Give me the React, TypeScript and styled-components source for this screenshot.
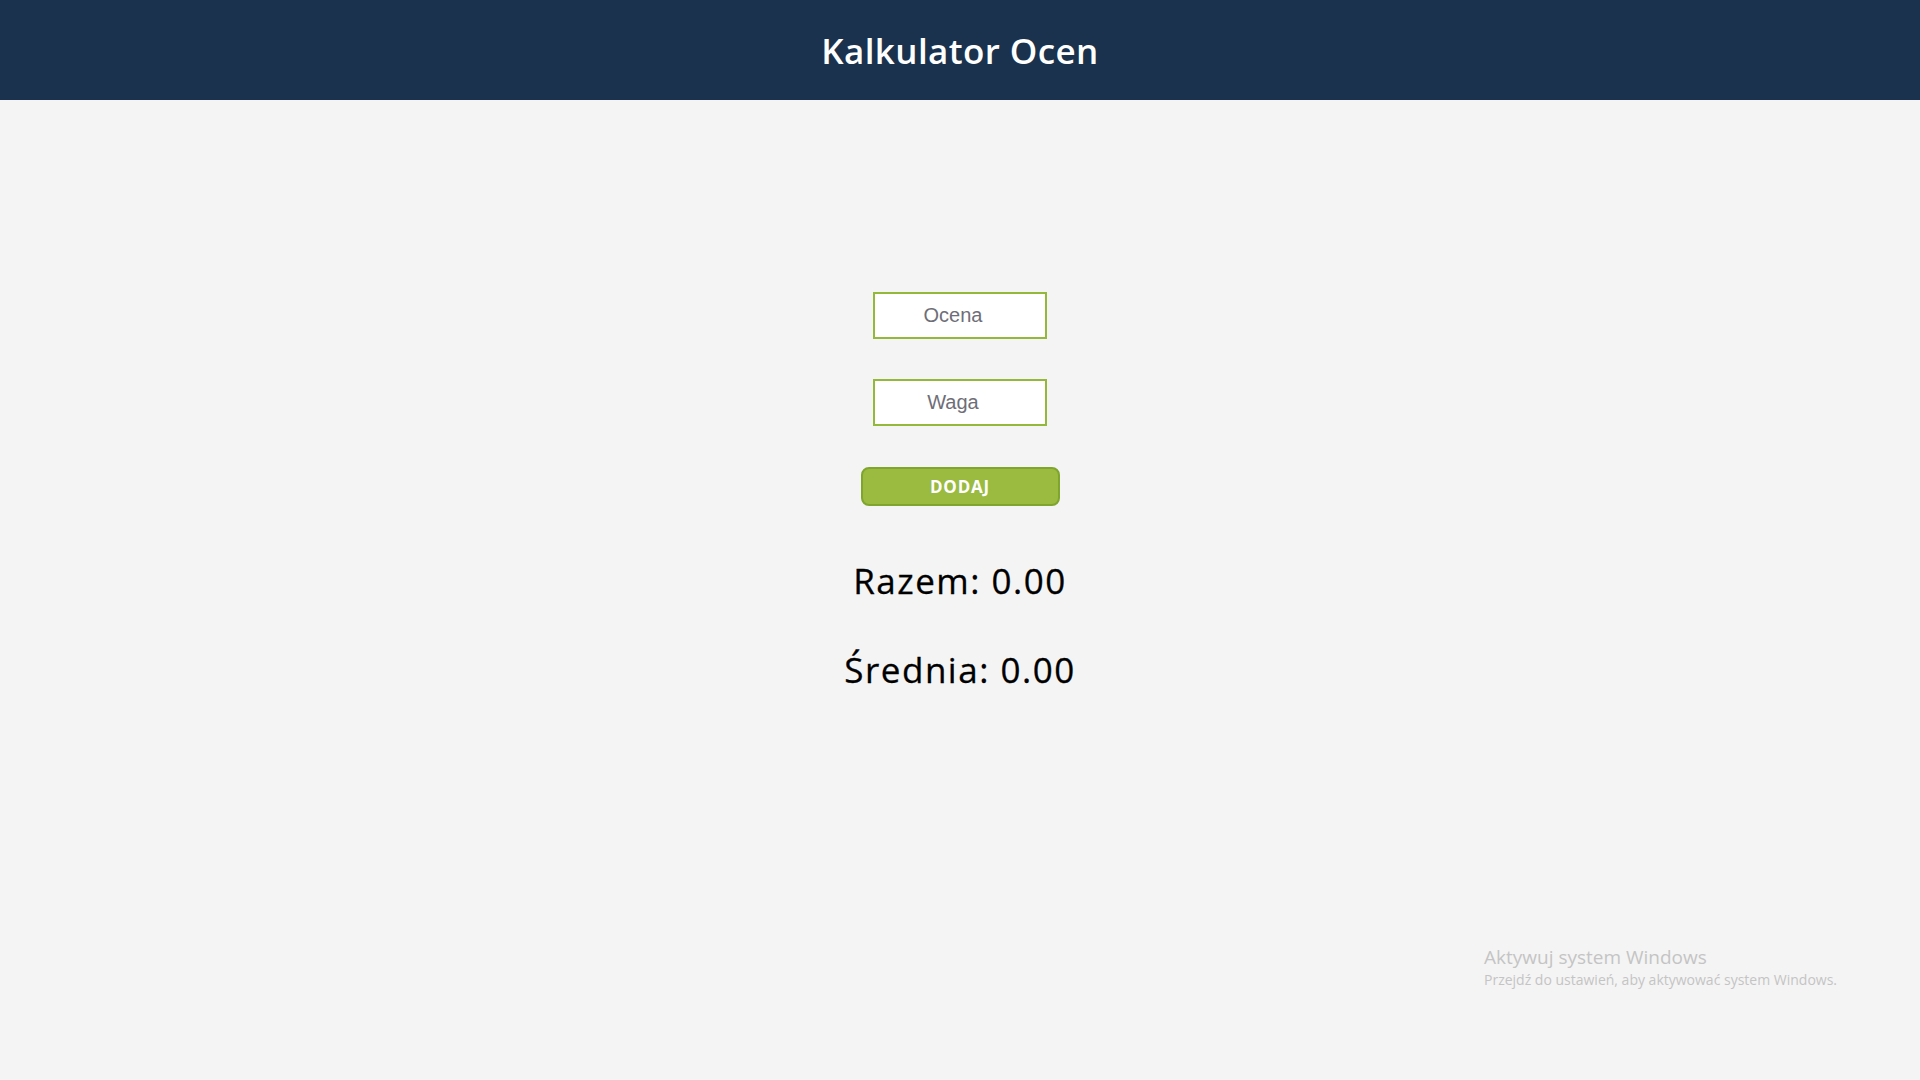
import styled, { createGlobalStyle } from "styled-components";

const GlobalStyle = createGlobalStyle`
  html, body {
    margin: 0;
    padding: 0;
    background: #f4f4f4;
  }
  body {
    font-family: "Open Sans", "Liberation Sans", sans-serif;
  }
`;

const Page = styled.div`
  min-height: 1080px;
  display: flex;
  flex-direction: column;
  position: relative;
`;

const Header = styled.header`
  height: 100px;
  background: #1a324d;
  display: flex;
  align-items: center;
  justify-content: center;
`;

const Title = styled.h1`
  margin: 0;
  color: #ffffff;
  font-family: "Open Sans", sans-serif;
  font-weight: 600;
  font-size: 35px;
  letter-spacing: 0.4px;
`;

const Main = styled.main`
  display: flex;
  flex-direction: column;
  align-items: center;
  padding-top: 192px;
`;

const Input = styled.input`
  box-sizing: border-box;
  width: 174px;
  height: 47px;
  border: 2px solid #93b83a;
  background: #ffffff;
  text-align: center;
  padding: 0 14px 0 0;
  font-family: "Liberation Sans", Arial, sans-serif;
  font-size: 20px;
  margin-bottom: 40px;
  outline: none;

  &::placeholder {
    color: #6e6e78;
  }
`;

const Button = styled.button`
  box-sizing: border-box;
  width: 199px;
  height: 39px;
  margin-top: 1px;
  background: #9aba40;
  border: 2px solid #7fa52c;
  border-radius: 8px;
  color: #ffffff;
  font-family: "Open Sans", sans-serif;
  font-weight: 700;
  font-size: 17px;
  letter-spacing: 0.8px;
  cursor: pointer;
`;

const Stat = styled.p<{ $gap: number }>`
  margin: ${(p) => p.$gap}px 0 0;
  color: #000000;
  font-family: "Open Sans", sans-serif;
  font-size: 35px;
  letter-spacing: 1.5px;
  line-height: 48px;
  -webkit-text-stroke: 0.3px #000000;
`;

const Watermark = styled.div`
  position: absolute;
  left: 1484px;
  top: 944px;
  color: #c4c4c4;
  font-family: "Open Sans", sans-serif;
`;

const WatermarkTitle = styled.div`
  font-size: 19px;
  line-height: 26px;
`;

const WatermarkText = styled.div`
  font-size: 14px;
  line-height: 20px;
`;

export default function App() {
  return (
    <Page>
      <GlobalStyle />
      <Header>
        <Title>Kalkulator Ocen</Title>
      </Header>
      <Main>
        <Input placeholder="Ocena" />
        <Input placeholder="Waga" />
        <Button>DODAJ</Button>
        <Stat $gap={51}>Razem: 0.00</Stat>
        <Stat $gap={41}>Średnia: 0.00</Stat>
      </Main>
      <Watermark>
        <WatermarkTitle>Aktywuj system Windows</WatermarkTitle>
        <WatermarkText>Przejdź do ustawień, aby aktywować system Windows.</WatermarkText>
      </Watermark>
    </Page>
  );
}
